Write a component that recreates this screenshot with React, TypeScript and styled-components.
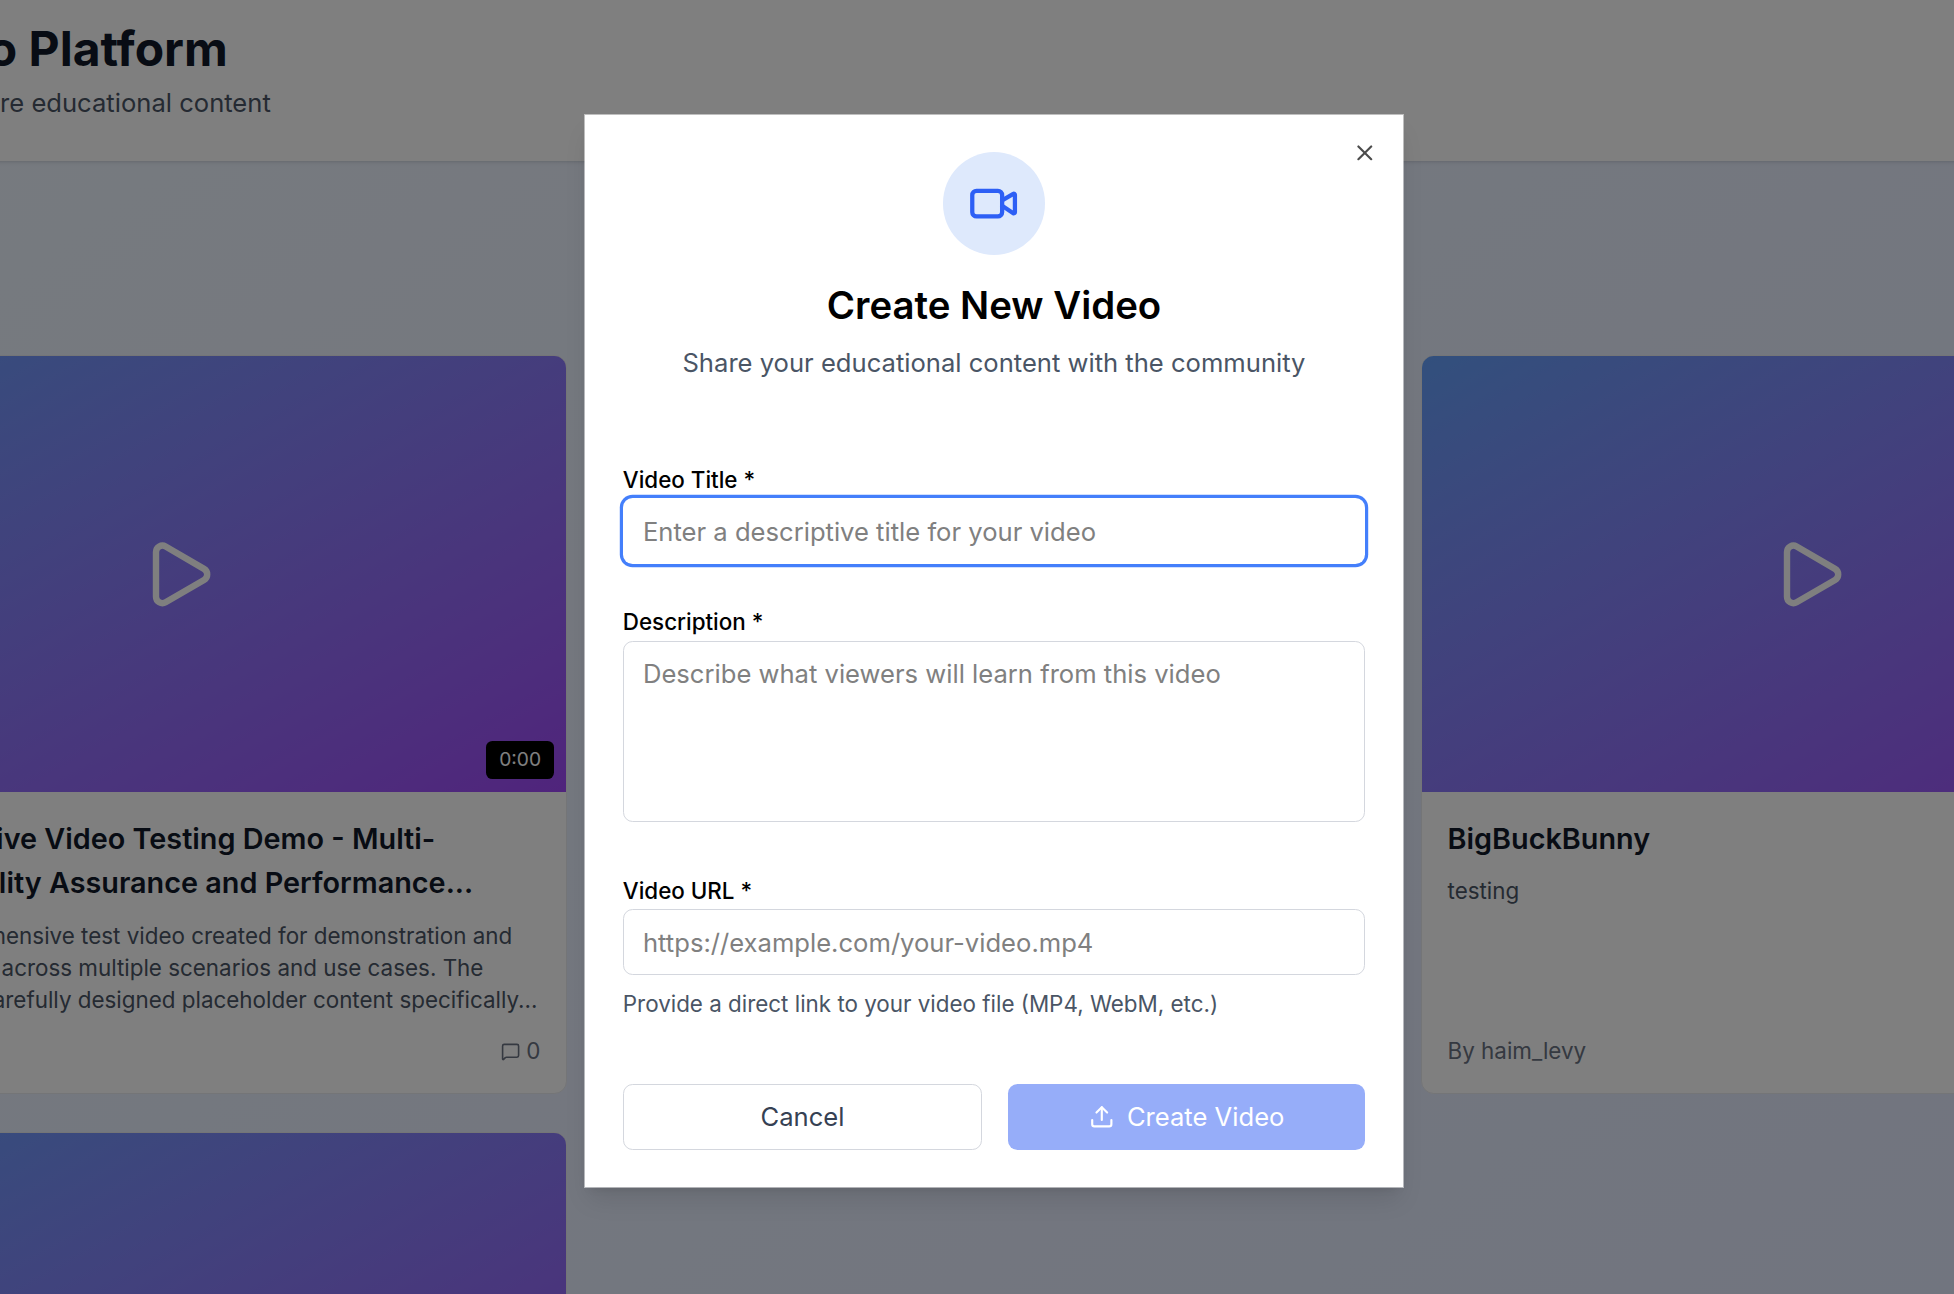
import React from "react";
import styled, { createGlobalStyle } from "styled-components";
import { MessageSquare, Play, Upload, Video, X } from "lucide-react";

const GlobalStyle = createGlobalStyle`
  *, *::before, *::after { box-sizing: border-box; }
  body {
    margin: 0;
    overflow: hidden;
    font-family: Inter, "Liberation Sans", sans-serif;
    font-size: 25.6px;
    line-height: 38.4px;
    color: #000;
    -webkit-font-smoothing: antialiased;
  }
  h1, h2, h3, p { margin: 0; }
  button, input, textarea { font: inherit; }
`;

const Viewport = styled.div`
  position: relative;
  width: 1954px;
  height: 1294px;
  overflow: hidden;
`;

const Page = styled.div`
  width: 2562px;
  min-height: 1800px;
  margin-left: -287px;
  background: linear-gradient(to bottom right, #eff6ff, #e0e7ff);
`;

const Header = styled.header`
  height: 161px;
  padding: 19.6px 76.8px 0;
  background: #fff;
  box-shadow: 0 1.6px 4.8px rgba(0, 0, 0, 0.1), 0 1.6px 3.2px -1.6px rgba(0, 0, 0, 0.1);
`;

const Brand = styled.div`
  display: flex;
  flex-direction: column;
  align-items: flex-end;
  gap: 6.4px;
  width: 481px;
  white-space: nowrap;
`;

const BrandTitle = styled.h1`
  margin-right: 43px;
  font-size: 48px;
  line-height: 57.6px;
  font-weight: 700;
  color: #101828;
`;

const Tagline = styled.p`
  color: #4a5565;
`;

const Grid = styled.main`
  display: grid;
  grid-template-columns: repeat(3, 777.2px);
  gap: 38.4px;
  padding: 194px 76.8px 0;
`;

const Card = styled.article<{ $column?: number }>`
  display: flex;
  flex-direction: column;
  grid-column: ${(p) => p.$column ?? "auto"};
  overflow: hidden;
  border: 1px solid #e8eaee;
  border-radius: 12.8px;
  background: #fff;
`;

const Thumb = styled.div`
  position: relative;
  display: flex;
  align-items: center;
  justify-content: center;
  aspect-ratio: 16 / 9;
  background: linear-gradient(to bottom right in oklab, #64a0fa, #a048f8);
  color: #fff;
`;

const Duration = styled.span`
  position: absolute;
  right: 12.2px;
  bottom: 12.8px;
  padding: 6.4px 12.8px;
  border-radius: 6.4px;
  background: #000;
  font-size: 19.2px;
  line-height: 25.6px;
`;

const CardBody = styled.div`
  display: flex;
  flex: 1;
  flex-direction: column;
  padding: 24.6px 25.6px 25.6px;
`;

const CardTitle = styled.h3`
  margin-bottom: 13.8px;
  font-size: 28.8px;
  line-height: 44.8px;
  font-weight: 600;
  color: #101828;
`;

const CardText = styled.p`
  margin-bottom: 19.2px;
  font-size: 22.4px;
  line-height: 32px;
  color: #4a5565;
`;

const Line = styled.span<{ $inset?: number }>`
  display: block;
  float: right;
  clear: both;
  white-space: nowrap;
  margin-right: ${(p) => p.$inset ?? 0}px;
`;

const CardMeta = styled.div`
  display: flex;
  align-items: center;
  justify-content: space-between;
  margin-top: auto;
  font-size: 22.4px;
  line-height: 32px;
  color: #6a7282;
`;

const Comments = styled.span`
  display: flex;
  align-items: center;
  gap: 6.4px;
`;

const Overlay = styled.div`
  position: absolute;
  inset: 0;
  display: flex;
  align-items: flex-start;
  padding: 113.6px 0 0 584.4px;
  background: rgba(0, 0, 0, 0.5);
`;

const Dialog = styled.section`
  position: relative;
  width: 819.2px;
  padding: 37.9px 37.4px 37.4px;
  border: 1px solid rgba(255, 255, 255, 0.5);
  background: #fff;
  background-clip: padding-box;
  box-shadow: 0 16px 24px -4.8px rgba(0, 0, 0, 0.1), 0 6.4px 9.6px -6.4px rgba(0, 0, 0, 0.1);
`;

const CloseButton = styled.button`
  position: absolute;
  top: 25.2px;
  right: 24.8px;
  display: flex;
  padding: 0;
  border: 0;
  background: none;
  color: #000;
  opacity: 0.7;
`;

const DialogHeader = styled.header`
  display: flex;
  flex-direction: column;
  align-items: center;
  margin-bottom: 76.8px;
  text-align: center;
`;

const IconCircle = styled.div`
  display: flex;
  align-items: center;
  justify-content: center;
  width: 102.4px;
  height: 102.4px;
  margin-bottom: 25.6px;
  border-radius: 50%;
  background: #dee9fc;
  color: #2d5ff5;
`;

const DialogTitle = styled.h2`
  margin-bottom: 12.8px;
  font-size: 38.4px;
  line-height: 51.2px;
  font-weight: 600;
`;

const DialogSubtitle = styled.p`
  color: #4a5565;
`;

const Form = styled.form`
  display: flex;
  flex-direction: column;
  gap: 38.4px;
`;

const Field = styled.div``;

const Label = styled.label`
  font-size: 22.4px;
  line-height: 32px;
  font-weight: 500;
`;

const controlStyles = `
  width: 100%;
  margin: 0;
  padding: 12.8px 19.2px;
  border: 1px solid #d4d7de;
  border-radius: 9.6px;
  background: #fff;
  color: #000;
  line-height: 38.4px;
  outline: none;
  resize: none;
  &::placeholder { color: #808080; opacity: 1; }
`;

const Input = styled.input<{ $active?: boolean }>`
  ${controlStyles}
  height: 66px;
  ${(p) => p.$active && "border-color: transparent; box-shadow: 0 0 0 3.2px #447ffb;"}
`;

const TextArea = styled.textarea`
  ${controlStyles}
`;

const Hint = styled.p`
  margin-top: 12.8px;
  font-size: 22.4px;
  line-height: 32px;
  color: #4a5565;
`;

const Actions = styled.div`
  display: flex;
  gap: 25.6px;
  padding-top: 25.6px;
`;

const Button = styled.button<{ $primary?: boolean }>`
  display: flex;
  flex: 1 1 0;
  align-items: center;
  justify-content: center;
  gap: 12.8px;
  height: 66px;
  padding: 0 25.6px;
  border: ${(p) => (p.$primary ? "0" : "1px solid #d4d7de")};
  border-radius: 9.6px;
  background: ${(p) => (p.$primary ? "#96adf9" : "#fff")};
  color: ${(p) => (p.$primary ? "#fff" : "#364153")};
`;

type VideoCardProps = {
  column?: number;
  title: React.ReactNode;
  text: React.ReactNode;
  author: string;
};

function VideoCard({ column, title, text, author }: VideoCardProps) {
  return (
    <Card $column={column}>
      <Thumb>
        <Play size={76.8} />
        <Duration>0:00</Duration>
      </Thumb>
      <CardBody>
        <CardTitle>{title}</CardTitle>
        <CardText>{text}</CardText>
        <CardMeta>
          <span>By {author}</span>
          <Comments>
            <MessageSquare size={19.2} />0
          </Comments>
        </CardMeta>
      </CardBody>
    </Card>
  );
}

export default function App() {
  return (
    <Viewport>
      <GlobalStyle />
      <Page>
        <Header>
          <Brand>
            <BrandTitle>EduVideo Platform</BrandTitle>
            <Tagline>Create and share educational content</Tagline>
          </Brand>
        </Header>
        <Grid>
          <VideoCard
            title={
              <>
                <Line $inset={105.2}>Comprehensive Video Testing Demo - Multi-</Line>
                <Line $inset={67.2}>Quality Assurance and Performance...</Line>
              </>
            }
            text={
              <>
                <Line $inset={28.2}>A comprehensive test video created for demonstration and</Line>
                <Line $inset={57}>testing across multiple scenarios and use cases. The</Line>
                <Line $inset={3}>content is carefully designed placeholder content specifically...</Line>
              </>
            }
            author="haim_levy"
          />
          <VideoCard column={3} title="BigBuckBunny" text="testing" author="haim_levy" />
          <VideoCard column={1} title="BigBuckBunny" text="testing" author="haim_levy" />
        </Grid>
      </Page>
      <Overlay>
        <Dialog>
          <CloseButton type="button" aria-label="Close">
            <X size={25.6} />
          </CloseButton>
          <DialogHeader>
            <IconCircle>
              <Video size={51.2} />
            </IconCircle>
            <DialogTitle>Create New Video</DialogTitle>
            <DialogSubtitle>Share your educational content with the community</DialogSubtitle>
          </DialogHeader>
          <Form>
            <Field>
              <Label htmlFor="title">Video Title *</Label>
              <Input id="title" $active placeholder="Enter a descriptive title for your video" />
            </Field>
            <Field>
              <Label htmlFor="description">Description *</Label>
              <TextArea
                id="description"
                rows={4}
                placeholder="Describe what viewers will learn from this video"
              />
            </Field>
            <Field>
              <Label htmlFor="url">Video URL *</Label>
              <Input id="url" placeholder="https://example.com/your-video.mp4" />
              <Hint>Provide a direct link to your video file (MP4, WebM, etc.)</Hint>
            </Field>
            <Actions>
              <Button type="button">Cancel</Button>
              <Button type="button" $primary>
                <Upload size={25.6} />
                Create Video
              </Button>
            </Actions>
          </Form>
        </Dialog>
      </Overlay>
    </Viewport>
  );
}
